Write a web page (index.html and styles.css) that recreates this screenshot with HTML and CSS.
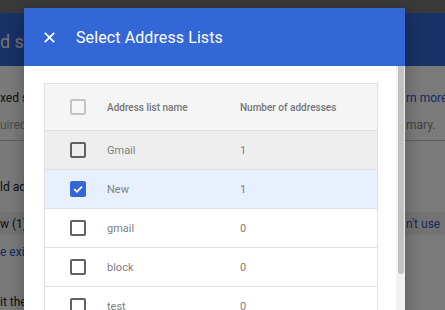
FILE: index.html
```html
<!DOCTYPE html>
<html>
<head>
<meta charset="utf-8">
<link rel="stylesheet" href="styles.css">
</head>
<body>
<div class="page">
  <div class="topbar"></div>
  <div class="band"><span class="band-title">d settings</span></div>
  <div class="line l1"><span class="dark">xed settings</span><a class="link right">rn more</a></div>
  <div class="line l2 field"><span class="hint">uired</span><span class="muted right">mary.</span></div>
  <div class="line l3"><span class="dark">ld address</span></div>
  <div class="line l4 shaded"><span class="dark">w (1)</span><a class="link right">n't use</a></div>
  <div class="line l5"><a class="link">e existing</a></div>
  <div class="line l6"><span class="dark">it the</span></div>
</div>
<div class="scrim"></div>
<div class="dialog">
  <div class="dialog-header">
    <svg class="close" width="11" height="11" viewBox="0 0 11 11"><path d="M0.8 0.8 L10.2 10.2 M10.2 0.8 L0.8 10.2" stroke="#fff" stroke-width="1.8" fill="none"/></svg>
    <span class="dialog-title">Select Address Lists</span>
  </div>
  <div class="dialog-body">
    <div class="content">
      <div class="table">
        <div class="row head">
          <div class="cell cb-cell"><span class="cb cb-disabled"></span></div>
          <div class="cell">Address list name</div>
          <div class="cell">Number of addresses</div>
        </div>
        <div class="row hover">
          <div class="cell cb-cell"><span class="cb"></span></div>
          <div class="cell">Gmail</div>
          <div class="cell">1</div>
        </div>
        <div class="row selected">
          <div class="cell cb-cell"><span class="cb cb-checked"><svg width="12" height="12" viewBox="0 0 12 12"><path d="M2.2 6.2 L4.9 8.8 L9.9 3.6" stroke="#fff" stroke-width="1.8" fill="none"/></svg></span></div>
          <div class="cell">New</div>
          <div class="cell">1</div>
        </div>
        <div class="row">
          <div class="cell cb-cell"><span class="cb"></span></div>
          <div class="cell">gmail</div>
          <div class="cell">0</div>
        </div>
        <div class="row">
          <div class="cell cb-cell"><span class="cb"></span></div>
          <div class="cell">block</div>
          <div class="cell">0</div>
        </div>
        <div class="row">
          <div class="cell cb-cell"><span class="cb"></span></div>
          <div class="cell">test</div>
          <div class="cell">0</div>
        </div>
      </div>
    </div>
    <div class="scrollbar"><div class="thumb"></div></div>
  </div>
</div>
</body>
</html>
```
FILE: styles.css
```css
html, body {
  margin: 0;
  padding: 0;
}
body {
  width: 445px;
  height: 310px;
  overflow: hidden;
  position: relative;
  font-family: Roboto, "Noto Sans", Arial, sans-serif;
  background: #fff;
}
.page {
  display: flex;
  flex-direction: column;
}
.topbar {
  height: 13px;
  background: #7a7a7a;
}
.band {
  height: 53px;
  background: #3367d6;
  display: flex;
  align-items: center;
  padding-top: 4px;
  box-sizing: border-box;
}
.band-title {
  width: 24px;
  overflow: hidden;
  font-size: 18px;
  color: #f0f0f0;
  white-space: nowrap;
}
.line {
  display: grid;
  grid-template-columns: 24px 382px 39px;
  align-items: center;
  font-size: 12px;
  white-space: nowrap;
  overflow: hidden;
}
.line > * { overflow: hidden; }
.line > .right { grid-column: 3; }
.l1 { height: 20px; margin-top: 22px; }
.l2 { height: 20px; margin-top: 10px; }
.field { border-bottom: 1px solid #c8c8c8; height: 22px; align-items: start; }
.l3 { height: 20px; margin-top: 36px; }
.l4 { height: 23px; margin-top: 15px; }
.l5 { height: 20px; margin-top: 7px; }
.l6 { height: 20px; margin-top: 30px; }
.shaded { background: #f1f1f1; }
.dark { color: #222; }
.hint { color: #9e9e9e; }
.muted { color: #888; }
.link { color: #2a56c6; }
.scrim {
  position: absolute;
  inset: 0;
  background: rgba(0, 0, 0, 0.52);
}
.dialog {
  position: absolute;
  left: 24px;
  top: 8px;
  width: 381px;
  height: 330px;
  background: #fff;
  box-shadow: 0 4px 16px rgba(0,0,0,0.3);
  display: flex;
  flex-direction: column;
  overflow: hidden;
}
.dialog-header {
  height: 58px;
  flex: none;
  background: #3367d6;
  display: flex;
  align-items: center;
  padding-left: 20px;
  gap: 21px;
}
.close { display: block; }
.dialog-title {
  color: #fff;
  font-size: 16px;
  letter-spacing: 0.1px;
  padding-top: 1px;
}
.dialog-body {
  flex: 1;
  display: flex;
  min-height: 0;
}
.content {
  flex: 1;
  padding: 17px 18px 0 20px;
}
.table {
  border: 1px solid #e0e0e0;
  border-bottom: none;
}
.row {
  display: grid;
  grid-template-columns: 62px 133px 1fr;
  height: 38px;
  border-top: 1px solid #e0e0e0;
  align-items: center;
  font-size: 11px;
  color: #808080;
}
.row.head {
  height: 46px;
  border-top: none;
  background: #f5f5f5;
  font-size: 10px;
  font-weight: 500;
  color: #757575;
}
.row.hover { background: #eeeeee; }
.row.selected { background: #e8f0fe; }
.cb-cell {
  padding-left: 25px;
  display: flex;
  align-items: center;
}
.cb {
  width: 16px;
  height: 16px;
  box-sizing: border-box;
  border: 2px solid #616161;
  border-radius: 2px;
  display: flex;
  align-items: center;
  justify-content: center;
}
.cb-disabled {
  border-color: #c4c4c4;
  background: #f7f7f7;
}
.cb-checked {
  border: none;
  background: #3367d6;
}
.scrollbar {
  width: 9px;
  flex: none;
  background: #f1f1f1;
}
.thumb {
  width: 6px;
  margin-left: 2px;
  height: 208px;
  background: #c1c1c1;
  border-radius: 0 0 3px 3px;
}
```
